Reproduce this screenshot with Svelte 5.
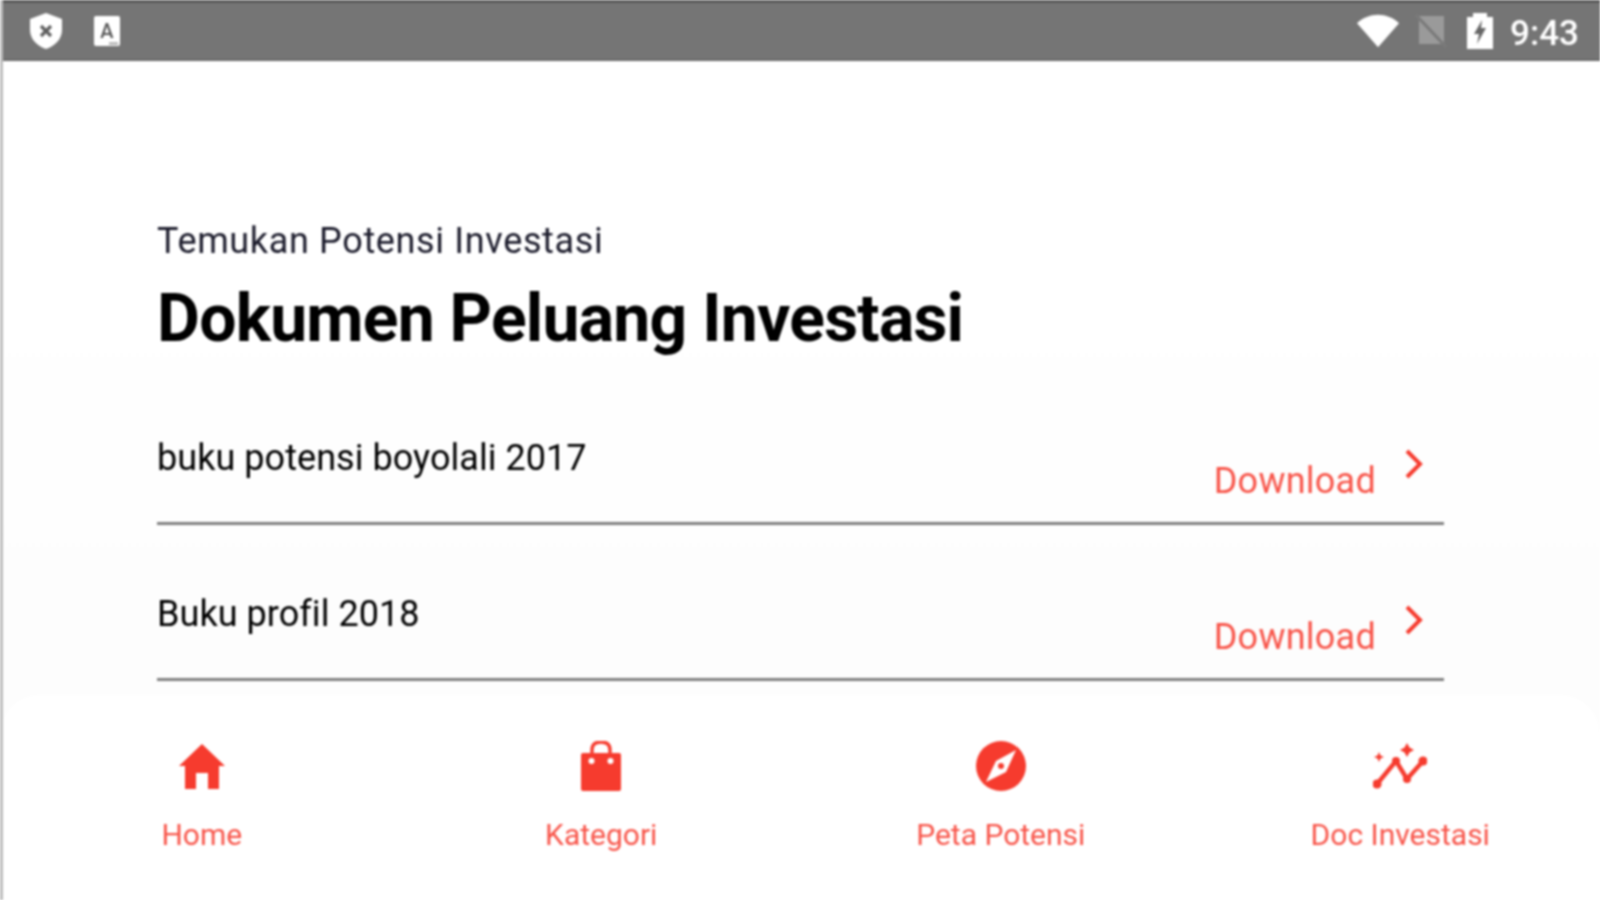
<script>
  const docs = ["buku potensi boyolali 2017", "Buku profil 2018"];
</script>

<div class="screen">
  <header class="status">
    <div class="status-left">
      <svg class="shield" viewBox="0 0 32 36" aria-hidden="true">
        <path d="M16 0 L32 6 V17 C32 26 25 33 16 36 C7 33 0 26 0 17 V6 Z" fill="#fff" />
        <path d="M11 13 L21 23 M21 13 L11 23" stroke="#5f5f5f" stroke-width="3.2" />
      </svg>
      <div class="a-box"><span>A</span></div>
    </div>
    <div class="status-right">
      <svg class="wifi" viewBox="0 0 44 34" aria-hidden="true">
        <path d="M0 9 C12 -3 32 -3 44 9 L22 34 Z" fill="#fff" />
      </svg>
      <svg class="sim" viewBox="0 0 32 34" aria-hidden="true">
        <path d="M4 2 H29 V30 H4 Z" fill="#9a9a9a" />
        <path d="M1 1 L31 33" stroke="#7a7a7a" stroke-width="3" />
      </svg>
      <svg class="battery" viewBox="0 0 26 36" aria-hidden="true">
        <path d="M0 4 H6 V0 H20 V4 H26 V36 H0 Z" fill="#fff" />
        <path d="M15 7 L7 21 H12 L10 31 L19 15 H14 Z" fill="#666" />
      </svg>
      <span class="time">9:43</span>
    </div>
  </header>

  <main class="content">
    <p class="eyebrow">Temukan Potensi Investasi</p>
    <h1>Dokumen Peluang Investasi</h1>

    {#each docs as doc}
      <div class="row">
        <span class="doc-name">{doc}</span>
        <div class="download">
          <span>Download</span>
          <svg class="chevron" viewBox="0 0 20 30" aria-hidden="true">
            <path d="M3 2 L16 15 L3 28" fill="none" stroke="#f63b2e" stroke-width="4" />
          </svg>
        </div>
      </div>
    {/each}
  </main>

  <nav class="tabs">
    <div class="tab">
      <svg class="tab-icon" viewBox="0 0 50 50" aria-hidden="true">
        <path d="M25 3 L48 25 H42 V48 H31 V32 H19 V48 H8 V25 H2 Z" fill="#f63b2e" />
      </svg>
      <span>Home</span>
    </div>
    <div class="tab">
      <svg class="tab-icon" viewBox="0 0 50 50" aria-hidden="true">
        <path d="M7 12 H43 Q45 12 45 14 V48 Q45 50 43 50 H7 Q5 50 5 48 V14 Q5 12 7 12 Z" fill="#f63b2e" />
        <path d="M16 18 V9 Q16 1 25 1 Q34 1 34 9 V18" fill="none" stroke="#f63b2e" stroke-width="3.4" />
        <circle cx="15.5" cy="20" r="3" fill="#fff" />
        <circle cx="34.5" cy="20" r="3" fill="#fff" />
      </svg>
      <span>Kategori</span>
    </div>
    <div class="tab">
      <svg class="tab-icon" viewBox="0 0 50 50" aria-hidden="true">
        <circle cx="25" cy="25" r="25" fill="#f63b2e" />
        <path d="M40 9 L30 31 L10 41 L20 20 Z" fill="#fff" />
        <circle cx="25" cy="25" r="3" fill="#f63b2e" />
      </svg>
      <span>Peta Potensi</span>
    </div>
    <div class="tab">
      <svg class="tab-icon wide" viewBox="0 0 54 50" aria-hidden="true">
        <path d="M4 43 L23 20 L34 38 L50 20" fill="none" stroke="#f63b2e" stroke-width="4.4" />
        <circle cx="4" cy="43" r="4.6" fill="#f63b2e" />
        <circle cx="23" cy="20" r="4" fill="#f63b2e" />
        <circle cx="34" cy="38" r="4" fill="#f63b2e" />
        <circle cx="50" cy="20" r="4.6" fill="#f63b2e" />
        <path d="M34 2 L36.5 6.5 L41 9 L36.5 11.5 L34 16 L31.5 11.5 L27 9 L31.5 6.5 Z" fill="#f63b2e" />
        <path d="M6 11 L7.5 14.5 L11 16 L7.5 17.5 L6 21 L4.5 17.5 L1 16 L4.5 14.5 Z" fill="#f63b2e" />
      </svg>
      <span>Doc Investasi</span>
    </div>
  </nav>
</div>

<style>
  :global(body) {
    margin: 0;
    background: #fff;
  }

  .screen {
    display: flex;
    flex-direction: column;
    height: 900px;
    overflow: hidden;
    border-left: 3px solid #bdbdbd;
    box-sizing: border-box;
    font-family: Roboto, "Liberation Sans", sans-serif;
    background: #fdfdfd;
    filter: blur(0.8px);
  }

  .status {
    display: flex;
    justify-content: space-between;
    align-items: center;
    flex: none;
    height: 61px;
    padding: 0 21px 0 28px;
    box-sizing: border-box;
    background: #757575;
    border-top: 3px solid #5a5a5a;
    border-bottom: 2px solid #6a6a6a;
    margin-left: -3px;
  }

  .status-left,
  .status-right {
    display: flex;
    align-items: center;
  }

  .shield {
    width: 32px;
    height: 36px;
    margin-left: 2px;
  }

  .a-box {
    position: relative;
    display: flex;
    align-items: center;
    justify-content: center;
    width: 26px;
    height: 30px;
    margin-left: 32px;
    border-radius: 2px;
    background: #fff;
    color: #555;
    font-size: 20px;
    font-weight: 500;
  }

  .a-box::after {
    content: "";
    position: absolute;
    right: 2px;
    bottom: 1px;
    width: 9px;
    height: 3px;
    background: #bbb;
  }

  .wifi {
    width: 42px;
    height: 34px;
  }

  .sim {
    width: 32px;
    height: 34px;
    margin-left: 16px;
  }

  .battery {
    width: 26px;
    height: 36px;
    margin-left: 20px;
  }

  .time {
    margin-left: 17px;
    padding-top: 4px;
    color: #fff;
    font-size: 35px;
    font-weight: 500;
  }

  .content {
    flex: 1;
    min-height: 0;
    padding: 158px 156px 0 154px;
    background: linear-gradient(#fff 40%, #fdfdfd);
  }

  .eyebrow {
    margin: 0;
    color: #1c1c2c;
    font-size: 36px;
    line-height: 44px;
    letter-spacing: 0.65px;
  }

  h1 {
    margin: 17px 0 0;
    color: #000;
    font-size: 66px;
    line-height: 78px;
    font-weight: 700;
    letter-spacing: -0.75px;
  }

  .row {
    display: flex;
    justify-content: space-between;
    height: 107px;
    margin-top: 49px;
    border-bottom: 3px solid #808080;
    box-sizing: border-box;
  }

  .row:first-of-type {
    margin-top: 60px;
  }

  .doc-name {
    margin-top: 18px;
    color: #000;
    font-size: 36px;
    line-height: 44px;
    letter-spacing: 0.05px;
  }

  .download {
    display: flex;
    align-items: flex-start;
    padding-right: 20px;
    color: #f8554a;
    font-size: 36px;
    line-height: 44px;
    letter-spacing: 0.25px;
  }

  .download span {
    margin-top: 41px;
  }

  .chevron {
    width: 20px;
    height: 30px;
    margin-top: 31px;
    margin-left: 28px;
  }

  .tabs {
    display: grid;
    grid-template-columns: repeat(4, 1fr);
    flex: none;
    height: 205px;
    padding: 46px 0 0 2px;
    box-sizing: border-box;
    margin-left: -3px;
    border-radius: 40px 40px 0 0;
    background: #fff;
  }

  .tab {
    display: flex;
    flex-direction: column;
    align-items: center;
    color: #f8554a;
    font-size: 30px;
    line-height: 36px;
  }

  .tab-icon {
    width: 50px;
    height: 50px;
    margin-bottom: 26px;
  }

  .tab-icon.wide {
    width: 54px;
  }
</style>
